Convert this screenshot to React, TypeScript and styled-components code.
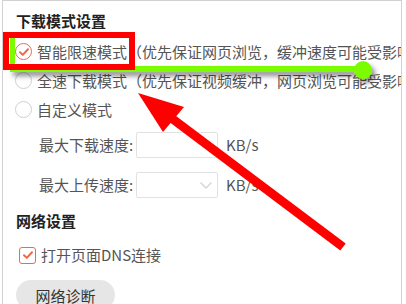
import React from "react";
import styled, { createGlobalStyle } from "styled-components";

const Global = createGlobalStyle`
  html, body { margin: 0; padding: 0; background: #ffffff; }
  body { width: 406px; height: 304px; overflow: hidden; font-family: "Noto Sans CJK SC", "Noto Sans", sans-serif; }
`;

const Stage = styled.div`
  position: relative;
  width: 406px;
  height: 304px;
  overflow: hidden;
`;

const Frame = styled.div`
  margin-left: 2px;
  width: 400px;
  height: 320px;
  border: 1px solid #d2d2d2;
  border-bottom: none;
  padding: 10px 0 0 13px;
  box-sizing: border-box;
  overflow: hidden;
  display: flex;
  flex-direction: column;
  color: #555;
  font-size: 15px;
  white-space: nowrap;
`;

const Title = styled.div<{ $mt?: number }>`
  font-weight: bold;
  color: #222;
  line-height: 20px;
  height: 20px;
  margin-top: ${(p) => p.$mt ?? 0}px;
`;

const OptionList = styled.div`
  display: flex;
  flex-direction: column;
  margin-top: 6px;
`;

const OptionRow = styled.label`
  display: flex;
  align-items: center;
  height: 29px;
  gap: 5px;
  margin-left: -1px;
`;

const Radio = styled.span<{ $on?: boolean }>`
  width: 17px;
  height: 17px;
  box-sizing: border-box;
  border-radius: 50%;
  border: ${(p) => (p.$on ? "1.5px solid #f2694a" : "1px solid #cfcfcf")};
  display: flex;
  align-items: center;
  justify-content: center;
  flex: none;
`;

const OptionText = styled.span`
  line-height: 20px;
  color: #555;
`;

const SpeedGroup = styled.div`
  display: flex;
  flex-direction: column;
  gap: 14px;
  margin-top: 8px;
  padding-left: 23px;
`;

const SpeedRow = styled.div`
  display: flex;
  align-items: center;
  height: 26px;
`;

const SpeedLabel = styled.span`
  width: 97px;
  line-height: 20px;
  color: #555;
`;

const Field = styled.div`
  position: relative;
  width: 82px;
  height: 26px;
  box-sizing: border-box;
  border: 1px solid #e2e2e2;
  border-radius: 2px;
  background: #fff;
`;

const Chevron = styled.svg`
  position: absolute;
  right: 4px;
  top: 8px;
`;

const Unit = styled.span`
  margin-left: 8px;
  color: #555;
  line-height: 20px;
`;

const CheckRow = styled.label`
  display: flex;
  align-items: center;
  gap: 5px;
  height: 20px;
  margin-top: 14px;
  margin-left: 3px;
`;

const CheckBox = styled.span`
  width: 17px;
  height: 17px;
  box-sizing: border-box;
  border: 1.5px solid #f2694a;
  border-radius: 3px;
  display: flex;
  align-items: center;
  justify-content: center;
  flex: none;
`;

const Button = styled.button`
  margin-top: 15px;
  width: 99px;
  height: 30px;
  border: none;
  border-radius: 15px;
  background: #e6e6e6;
  color: #333;
  font-family: inherit;
  font-size: 15px;
  padding: 0;
  align-self: flex-start;
`;

const Overlay = styled.svg`
  position: absolute;
  left: 0;
  top: 0;
  pointer-events: none;
`;

const Check = ({ size = 12 }: { size?: number }) => (
  <svg width={size} height={size} viewBox="0 0 12 12">
    <path d="M2 6.2 L4.8 8.9 L10 3.3" fill="none" stroke="#f2694a" strokeWidth="2" strokeLinecap="round" strokeLinejoin="round" />
  </svg>
);

export default function App() {
  return (
    <Stage>
      <Global />
      <Frame>
        <Title>下载模式设置</Title>
        <OptionList>
          <OptionRow>
            <Radio $on>
              <Check />
            </Radio>
            <OptionText>智能限速模式（优先保证网页浏览，缓冲速度可能受影响）</OptionText>
          </OptionRow>
          <OptionRow>
            <Radio />
            <OptionText>全速下载模式（优先保证视频缓冲，网页浏览可能受影响）</OptionText>
          </OptionRow>
          <OptionRow>
            <Radio />
            <OptionText>自定义模式</OptionText>
          </OptionRow>
        </OptionList>
        <SpeedGroup>
          <SpeedRow>
            <SpeedLabel>最大下载速度:</SpeedLabel>
            <Field />
            <Unit>KB/s</Unit>
          </SpeedRow>
          <SpeedRow>
            <SpeedLabel>最大上传速度:</SpeedLabel>
            <Field>
              <Chevron width="14" height="9" viewBox="0 0 14 9">
                <path d="M1.5 1.5 L7 7 L12.5 1.5" fill="none" stroke="#d4d4d4" strokeWidth="1.4" />
              </Chevron>
            </Field>
            <Unit>KB/s</Unit>
          </SpeedRow>
        </SpeedGroup>
        <Title $mt={13}>网络设置</Title>
        <CheckRow>
          <CheckBox>
            <Check />
          </CheckBox>
          <OptionText>打开页面DNS连接</OptionText>
        </CheckRow>
        <Button>网络诊断</Button>
      </Frame>
      <Overlay width="406" height="304" viewBox="0 0 406 304">
        <defs>
          <filter id="sh" x="-10%" y="-50%" width="120%" height="300%">
            <feDropShadow dx="3" dy="4" stdDeviation="2.5" floodColor="#000" floodOpacity="0.45" />
          </filter>
        </defs>
        <g filter="url(#sh)">
          <rect x="10" y="66" width="353" height="6" fill="#7cfc00" />
          <circle cx="363" cy="70" r="9" fill="#7cfc00" />
        </g>
        <rect x="10" y="37" width="5" height="27" fill="#7cfc00" />
        <rect x="6" y="35" width="126" height="32" fill="none" stroke="#ff0000" strokeWidth="6" />
        <line x1="170" y1="117" x2="343" y2="247" stroke="#ff0000" strokeWidth="9" />
        <polygon points="138,93 163,132 184,107" fill="#ff0000" />
      </Overlay>
    </Stage>
  );
}
